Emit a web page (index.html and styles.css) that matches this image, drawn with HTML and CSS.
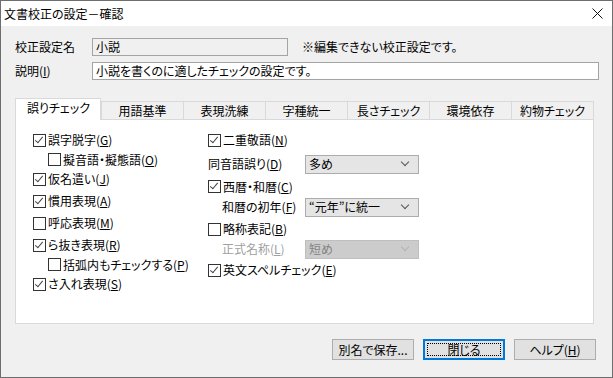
FILE: index.html
```html
<!DOCTYPE html>
<html lang="ja">
<head>
  <meta charset="UTF-8" />
  <title>文書校正の設定－確認</title>
  <link rel="stylesheet" href="styles.css">
</head>
<body>
  <div class="window">
    <div class="titlebar">
      <span class="title">文書校正の設定－確認</span>
      <span class="close">
        <svg width="11" height="11" viewBox="0 0 11 11"><path d="M0.5 0.5 L10.5 10.5 M10.5 0.5 L0.5 10.5" stroke="#111" stroke-width="1" fill="none"/></svg>
      </span>
    </div>

    <div class="dialog">
      <div class="field-row">
        <span class="field-label">校正設定名</span>
        <div class="textbox readonly">小説</div>
        <span class="note">※編集できない校正設定です。</span>
      </div>
      <div class="field-row second">
        <span class="field-label">説明(<u>I</u>)</span>
        <div class="textbox wide">小説を書くのに適したチェックの設定です。</div>
      </div>

      <!-- タブ -->
      <div class="tabs">
        <div class="tab active">誤りチェック</div>
        <div class="tab">用語基準</div>
        <div class="tab">表現洗練</div>
        <div class="tab">字種統一</div>
        <div class="tab">長さチェック</div>
        <div class="tab">環境依存</div>
        <div class="tab last">約物チェック</div>
      </div>

      <div class="panel">
        <div class="col left">
          <div class="row"><span class="cb checked"></span>誤字脱字(<u>G</u>)</div>
          <div class="row sub"><span class="cb"></span>擬音語・擬態語(<u>O</u>)</div>
          <div class="row"><span class="cb checked"></span>仮名遣い(<u>J</u>)</div>
          <div class="row"><span class="cb checked"></span>慣用表現(<u>A</u>)</div>
          <div class="row"><span class="cb"></span>呼応表現(<u>M</u>)</div>
          <div class="row"><span class="cb checked"></span>ら抜き表現(<u>R</u>)</div>
          <div class="row sub"><span class="cb"></span>括弧内もチェックする(<u>P</u>)</div>
          <div class="row"><span class="cb checked"></span>さ入れ表現(<u>S</u>)</div>
        </div>
        <div class="col right">
          <div class="row"><span class="cb checked"></span>二重敬語(<u>N</u>)</div>
          <div class="row combo-row first">
            <span class="combo-label">同音語誤り(<u>D</u>)</span>
            <div class="combo">多め<span class="arrow"></span></div>
          </div>
          <div class="row short"><span class="cb checked"></span>西暦・和暦(<u>C</u>)</div>
          <div class="row combo-row indent">
            <span class="combo-label">和暦の初年(<u>F</u>)</span>
            <div class="combo">“元年”に統一<span class="arrow"></span></div>
          </div>
          <div class="row"><span class="cb"></span>略称表記(<u>B</u>)</div>
          <div class="row combo-row indent tight disabled">
            <span class="combo-label">正式名称(<u>L</u>)</span>
            <div class="combo">短め<span class="arrow"></span></div>
          </div>
          <div class="row tall"><span class="cb checked"></span>英文スペルチェック(<u>E</u>)</div>
        </div>
      </div>

      <div class="buttons">
        <button class="btn">別名で保存...</button>
        <button class="btn default">閉じる</button>
        <button class="btn">ヘルプ(<u>H</u>)</button>
      </div>
    </div>
  </div>
</body>
</html>
```

FILE: styles.css
```css
* { margin: 0; padding: 0; box-sizing: border-box; }
html, body { width: 613px; height: 378px; overflow: hidden; }

body {
  font-family: "Noto Sans CJK JP", "Noto Sans", sans-serif;
  font-size: 12px;
  font-feature-settings: "palt";
  color: #000;
  background: #f0f0f0;
}

u { text-decoration: underline; text-underline-offset: 1px; }

.window {
  width: 613px;
  height: 378px;
  border: 1px solid #6e6e6e;
  background: #f0f0f0;
  display: flex;
  flex-direction: column;
}

/* TITLE BAR */
.titlebar {
  height: 25px;
  background: #fff;
  display: flex;
  align-items: center;
  justify-content: space-between;
  padding-left: 3px;
  padding-right: 9px;
  flex-shrink: 0;
}

.title { font-size: 12px; line-height: 1; }

.close { display: flex; align-items: center; }

/* DIALOG BODY */
.dialog {
  padding: 12px 13px 0 14px;
  display: flex;
  flex-direction: column;
}

.field-row {
  display: flex;
  align-items: center;
  height: 18px;
}

.field-row.second { margin-top: 6px; }

.field-label {
  width: 77px;
  line-height: 1;
}

.textbox {
  height: 18px;
  border: 1px solid #a4a4a4;
  background: #fff;
  padding-left: 3px;
  display: flex;
  align-items: center;
  line-height: 1;
}

.textbox.readonly {
  width: 196px;
  background: #f0f0f0;
}

.textbox.wide { width: 507px; }

.note {
  margin-left: 14px;
  line-height: 1;
}

/* TABS */
.tabs {
  display: flex;
  align-items: flex-end;
  margin-top: 18px;
  height: 21px;
  position: relative;
  z-index: 1;
}

.tab {
  width: 82px;
  height: 18px;
  border-top: 1px solid #d9d9d9;
  border-left: 1px solid #d9d9d9;
  background: #f0f0f0;
  display: flex;
  align-items: center;
  justify-content: center;
  line-height: 1;
}

.tab.last {
  width: 83px;
  border-right: 1px solid #d9d9d9;
}

.tab.active {
  width: 86px;
  height: 22px;
  margin-bottom: -1px;
  border: 1px solid #d9d9d9;
  border-bottom: none;
  background: #fff;
  padding-bottom: 3px;
  justify-content: flex-start;
  padding-left: 11px;
}

.panel {
  width: 579px;
  height: 205px;
  border: 1px solid #d9d9d9;
  background: #fff;
  padding: 9px 0 0 17px;
  display: flex;
}

.col { display: flex; flex-direction: column; }
.col.left { width: 175px; }

.row {
  height: 22px;
  display: flex;
  align-items: center;
  line-height: 1;
  white-space: nowrap;
}

.row.sub { height: 17px; padding-left: 15px; }
.row.short { height: 19px; }
.row.tall { height: 24px; }

/* CHECKBOX */
.cb {
  width: 13px;
  height: 13px;
  border: 1px solid #333;
  background: #fff;
  margin-right: 2px;
  flex-shrink: 0;
  position: relative;
}

.cb.checked::after {
  content: "";
  position: absolute;
  left: 3px;
  top: 0px;
  width: 3px;
  height: 7px;
  border-right: 1.3px solid #444;
  border-bottom: 1.3px solid #444;
  transform: rotate(40deg);
}

/* COMBO */
.combo-row { height: 26px; }
.combo-row.indent { padding-left: 14px; height: 22px; }
.combo-row.tight { height: 18px; }

.combo-label { width: 97px; }
.combo-row.indent .combo-label { width: 83px; }

.combo {
  width: 114px;
  height: 19px;
  border: 1px solid #acacac;
  background: #e5e5e5;
  padding-left: 3px;
  display: flex;
  align-items: center;
  justify-content: space-between;
  line-height: 1;
}

.arrow {
  width: 6px;
  height: 6px;
  border-right: 1px solid #555;
  border-bottom: 1px solid #555;
  transform: rotate(45deg);
  margin-right: 10px;
  margin-top: -4px;
}

.disabled .combo-label { color: #a0a0a0; }
.disabled .combo {
  background: #cccccc;
  border-color: #bfbfbf;
  color: #838383;
}
.disabled .arrow { border-color: #b3b3b3; }

/* BUTTONS */
.buttons {
  display: flex;
  justify-content: flex-end;
  gap: 9px;
  margin-top: 15px;
  padding-right: 3px;
}

.btn {
  width: 82px;
  height: 21px;
  border: 1px solid #adadad;
  background: #e1e1e1;
  font-family: inherit;
  font-size: 12px;
  font-feature-settings: "palt";
  line-height: 1;
  color: #000;
  position: relative;
}

.btn.default {
  border-color: #0078d7;
  box-shadow: inset 0 0 0 1px #0078d7;
}

.btn.default::after {
  content: "";
  position: absolute;
  left: 3px; top: 3px; right: 3px; bottom: 3px;
  border: 1px dotted #000;
}
```
